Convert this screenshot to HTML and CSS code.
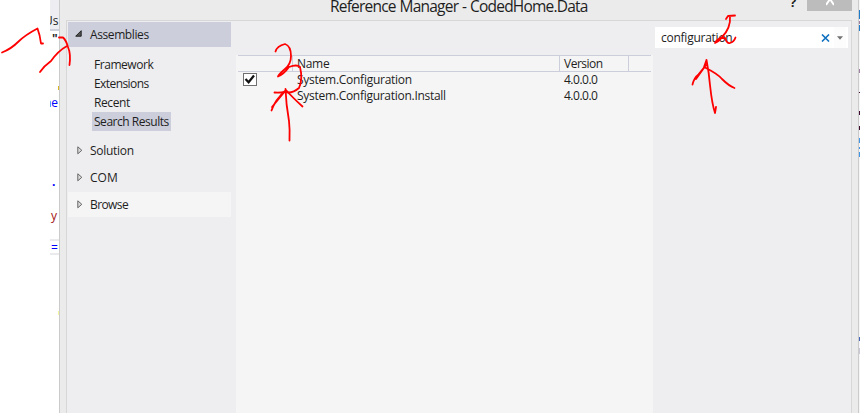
FILE: index.html
```
<!DOCTYPE html>
<html lang="en">
<head>
<meta charset="utf-8">
<title>Reference Manager - CodedHome.Data</title>
<link rel="stylesheet" href="styles.css">
</head>
<body>
<div class="desktop">
  <div class="editor">
    <div class="code tab"><span>Us</span></div>
    <div class="code string"><b>"</b></div>
    <div class="code mark gold"></div>
    <div class="code keyword"><span>ne</span></div>
    <div class="code member"><span>.</span></div>
    <div class="code literal"><span>y</span></div>
    <div class="code current"><span>=</span></div>
    <div class="code mark pale"></div>
  </div>
  <main class="dialog">
    <header class="titlebar">
      <h1>Reference Manager - CodedHome.Data</h1>
      <span class="help">?</span>
      <div class="close"><svg width="8" height="13" viewBox="0 0 8 13"><path d="M0 0 8 12M8 0 0 12" stroke="#fff" stroke-width="2" fill="none"/></svg></div>
    </header>
    <section class="content">
      <nav class="sidebar">
        <div class="group selected"><svg width="7" height="7" viewBox="0 0 7 7"><path d="M6.2.7V6.2H.7Z" fill="#555" stroke="#222"/></svg><span class="t-assemblies">Assemblies</span></div>
        <ul>
          <li><span class="t-framework">Framework</span></li>
          <li><span class="t-extensions">Extensions</span></li>
          <li><span class="t-recent">Recent</span></li>
          <li class="active"><span class="t-results">Search Results</span></li>
        </ul>
        <div class="group"><svg width="6" height="9" viewBox="0 0 6 9"><path d="M.8.8 4.8 4.3.8 7.8Z" fill="#ddd" stroke="#666"/></svg><span class="t-solution">Solution</span></div>
        <div class="group"><svg width="6" height="9" viewBox="0 0 6 9"><path d="M.8.8 4.8 4.3.8 7.8Z" fill="#ddd" stroke="#666"/></svg><span class="t-com">COM</span></div>
        <div class="group hover"><svg width="6" height="9" viewBox="0 0 6 9"><path d="M.8.8 4.8 4.3.8 7.8Z" fill="#ddd" stroke="#666"/></svg><span class="t-browse">Browse</span></div>
      </nav>
      <div class="list">
        <div class="row head"><div></div><div><span class="t-name">Name</span></div><div><span class="t-version">Version</span></div><div></div></div>
        <div class="row"><div><i class="check"><svg width="12" height="11" viewBox="0 0 12 11"><path d="M1.5 5 4.6 8.3 10 1.5" fill="none" stroke="#111" stroke-width="2.2"/></svg></i></div><div><span class="t-config">System.Configuration</span></div><div><span class="t-num">4.0.0.0</span></div></div>
        <div class="row"><div></div><div><span class="t-install">System.Configuration.Install</span></div><div><span class="t-num">4.0.0.0</span></div></div>
      </div>
      <aside class="side">
        <div class="search"><span class="query t-query">configuration</span>
          <svg class="clear" width="9" height="8" viewBox="0 0 9 8"><path d="M1 .5 8 7.5M8 .5 1 7.5" stroke="#1070c0" stroke-width="1.6"/></svg>
          <div class="drop"><svg width="6" height="4" viewBox="0 0 6 4"><path d="M0 .3H6L3 3.7Z" fill="#717171"/></svg></div>
        </div>
      </aside>
    </section>
  </main>
  <svg class="edge" width="1" height="413" viewBox="0 0 1 413" shape-rendering="crispEdges">
    <path fill="#f5f5f8" d="M0 0H1V413H0Z"/>
    <path fill="#207cca" d="M0 10H1V19H0ZM0 25H1V31H0Z"/>
    <path fill="#a080a0" d="M0 21H1V24H0ZM0 69H1V73H0Z"/>
    <path fill="#400b30" d="M0 92H1V93H0ZM0 111H1V115H0ZM0 126H1V130H0Z"/>
    <path fill="#4096e8" d="M0 138H1V143H0ZM0 147H1V149H0ZM0 152H1V157H0Z"/>
    <path fill="#4464b8" d="M0 337H1V341H0Z"/>
    <path fill="#c8c8d6" d="M0 348H1V354H0Z"/>
  </svg>
  <svg class="ink" width="860" height="413" viewBox="0 0 860 413">
    <path d="M2 52.500Q11 49 18 42T37.500 28.500Q40 35 41 43.500H43"/>
    <path d="M40 72Q44 66 51 61Q58 51 67 46M59 37.500H63Q66 40 68 47Q71 54 69.500 65"/>
    <path d="M275.500 51.500Q277 46 285 44Q291 46 291 56Q291 64 285 69Q278 75 278 76.500Q284 74 289 67Q297 64 300 67Q303 79 299 88Q292 94 285 92Q279 93 274.500 92.500"/>
    <path d="M271.500 110.500Q275 100 286 90L272 107M285.500 89.500Q292 97 302.500 106.500M285.500 89Q286 104 289 121Q290 130 289.500 140.500"/>
    <path d="M726 19 728 16 735 15.500M730 16Q731 28 722 37Q716 40 715 43Q721 40 721 38L725 38Q727 44 730 43Q734 42 735.500 37.500"/>
    <path d="M692.500 84.500Q694 78 698 75L706 65 696 79M706.500 60 704 67Q718 74 722 79Q729 86 734.500 88M706.500 60Q709 73 710 85Q712 104 715 113L716 107"/>
  </svg>
</div>
</body>
</html>
```
FILE: styles.css
```
* { box-sizing: border-box; }
body { margin: 0; background: #fff; font: 12px/16px "Open Sans", "Noto Sans", sans-serif; color: #1e1e1e; overflow: hidden; }
.desktop { position: relative; display: flex; width: 860px; height: 413px; overflow: hidden; }
.editor { width: 9px; margin-left: 50px; overflow: hidden; }
.code { overflow: hidden; white-space: nowrap; }
.code span { display: block; }
.tab { height: 31px; padding-top: 13px; background: #eeeef2; border-bottom: 2px solid #ccceda; }
.tab span { margin-left: -6px; }
.string { height: 16px; padding-left: 2px; }
.mark { width: 1px; height: 4px; margin-left: 8px; }
.gold { margin-top: 39px; background: #d8b520; }
.keyword { margin-top: 5px; height: 16px; color: #00f; }
.keyword span { margin-left: -6px; }
.member { margin-top: 63px; height: 16px; padding-left: 2px; color: #00f; font-weight: 700; }
.literal { margin-top: 18px; height: 16px; color: #a31515; padding-left: 1px; }
.current { margin-top: 15px; height: 16px; line-height: 13px; border: solid #eaeaec; border-width: 2px 0; color: #00f; padding-left: 1px; }
.pale { margin-top: 56px; background: #f5f59b; }
.dialog { display: flex; flex-direction: column; width: 800px; height: 413px; padding: 0 6px; border: solid #cbcbcb; border-width: 0 1px; background: #ebebeb; }
.titlebar { display: flex; height: 20px; overflow: hidden; }
h1 { width: 258px; margin: -5px 0 0 264px; font-size: 15.5px; line-height: 22px; font-weight: 400; letter-spacing: -.79px; word-spacing: .6px; white-space: nowrap; }
.help { margin: -6px 0 0 202px; width: 8px; font-size: 13px; font-weight: 700; line-height: 17px; }
.close { display: flex; justify-content: center; align-items: flex-start; width: 45px; height: 11px; margin-left: 9px; background: #bcbcbc; }
.close svg { margin-top: -7px; }
.content { display: flex; flex: 1; border: solid #d7d7d7; border-width: 1px 1px 0; background: #eeeef0; }
.sidebar { width: 164px; padding: 1px 0 0 1px; }
.group { display: grid; grid-template-columns: 15px 1fr; align-items: center; height: 25px; padding-left: 7px; margin-bottom: 2px; }
.group svg { margin-left: 2px; margin-top: -1px; }
.group.selected svg { margin-left: 0; margin-top: -2px; }
.selected { margin-bottom: 8px; background: #cccedb; }
.hover { background: #f5f5f5; }
ul { margin: 0 0 7px; padding: 0 0 0 24px; list-style: none; }
li { width: 79px; height: 19px; padding: 2px 0 0 2px; white-space: nowrap; }
.active { background: #cccedb; }
.t-assemblies { letter-spacing: -.4px; }
.t-framework { letter-spacing: -.45px; }
.t-extensions { letter-spacing: -.57px; }
.t-recent { letter-spacing: -.4px; }
.t-results { letter-spacing: -.47px; }
.t-solution { letter-spacing: -.28px; }
.t-browse { letter-spacing: -.6px; }
.t-name { letter-spacing: -.3px; }
.t-version { letter-spacing: -.5px; }
.t-num { letter-spacing: -.5px; }
.t-config { letter-spacing: -.26px; }
.t-install { letter-spacing: -.28px; }
.t-query { letter-spacing: -.25px; }
.list { width: 417px; margin: 34px 0 0 5px; padding: 0 2px; background: #f5f5f5; }
.row { display: grid; grid-template-columns: 55px 267px 69px 22px; height: 16px; white-space: nowrap; }
.row > div { padding-left: 4px; }
.row > div:first-child { padding-left: 5px; }
.head { height: 17px; border: solid #cccedb; border-width: 1px 0; line-height: 15px; }
.head > div { border-right: 1px solid #cccedb; }
.head > div:last-child { border: 0; }
.check { display: grid; place-items: center; width: 14px; height: 13px; margin-top: 1px; border: 1px solid #707070; background: #fff; }
.side { flex: 1; padding: 6px 3px 0 2px; }
.search { display: flex; align-items: center; height: 21px; padding-left: 6px; background: #fff; }
.query { width: 160px; }
.drop { display: grid; place-items: center; width: 12px; height: 21px; margin-left: 4px; background: #fcfcfc; }
.ink { position: absolute; inset: 0; }
.ink path { fill: none; stroke: #f00; stroke-width: 1.8; stroke-linecap: round; stroke-linejoin: round; }
```
